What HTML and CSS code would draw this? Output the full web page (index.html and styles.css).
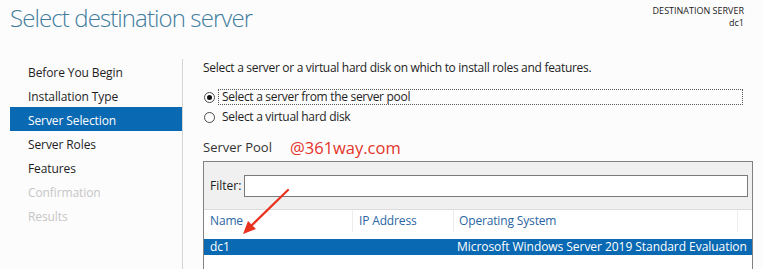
FILE: index.html
```html
<!DOCTYPE html>
<html>

<head>
  <meta charset="utf-8">
  <meta name="viewport" content="width=device-width, initial-scale=1">
  <title>Add Roles and Features Wizard</title>
  <link rel="stylesheet" href="styles.css">
</head>

<body>
	<div class="page">
		<div class="header">
			<h1>Select destination server</h1>
			<div class="dest">
				<div>DESTINATION SERVER</div>
				<div>dc1</div>
			</div>
		</div>

		<div class="main">
			<ul class="nav">
				<li>Before You Begin</li>
				<li>Installation Type</li>
				<li class="active">Server Selection</li>
				<li>Server Roles</li>
				<li>Features</li>
				<li class="off">Confirmation</li>
				<li class="off">Results</li>
			</ul>

			<div class="content">
				<p class="intro">Select a server or a virtual hard disk on which to install roles and features.</p>

				<div class="option">
					<span class="radio checked"></span>
					<span class="label focus">Select a server from the server pool</span>
				</div>
				<div class="option">
					<span class="radio"></span>
					<span class="label">Select a virtual hard disk</span>
				</div>

				<div class="pool-title">
					<span>Server Pool</span>
					<span class="mark">@361way.com</span>
				</div>

				<div class="pool">
					<div class="filter">
						<span>Filter:</span>
						<div class="input"></div>
					</div>
					<div class="cols">
						<div class="col c-name">Name</div>
						<div class="col c-ip">IP Address</div>
						<div class="col c-os">Operating System</div>
						<div class="col c-end"></div>
					</div>
					<div class="row selected">
						<div class="c-name">dc1</div>
						<div class="c-ip"></div>
						<div class="c-os">Microsoft Windows Server 2019 Standard Evaluation</div>
					</div>
				</div>
			</div>
		</div>

		<!-- red arrow drawn over the screenshot -->
		<svg class="arrow" width="60" height="60" viewBox="0 0 60 60">
			<line x1="48" y1="3" x2="10" y2="40" stroke="#e8331f" stroke-width="2.2" stroke-linecap="round"/>
			<polygon points="3,47 8,34 16,42" fill="#e8331f"/>
		</svg>
	</div>
</body>

</html>
```

FILE: styles.css
```css
body {
	margin: 0;
	background-color: #fcfcfc;
	font-family: "Open Sans", "Noto Sans", sans-serif;
	font-size: 12px;
	color: #1e1e1e;
}

.page {
	position: relative;
	width: 762px;
	height: 269px;
	overflow: hidden;
}

.header {
	display: flex;
	justify-content: space-between;
	height: 59px;
}

h1 {
	margin: 0;
	padding: 1px 0 0 10px;
	font-size: 24px;
	font-weight: 300;
	line-height: 34px;
	letter-spacing: -0.9px;
	color: #3f7c9e;
}

.dest {
	padding: 5px 18px 0 0;
	text-align: right;
	font-size: 9px;
	line-height: 12px;
	color: #222;
}

.main {
	display: flex;
}

.nav {
	list-style: none;
	margin: 0 0 0 10px;
	padding: 0;
	width: 172px;
	height: 210px;
	border-right: 1px solid #d4d4d4;
	letter-spacing: -0.1px;
}

.nav li {
	height: 24px;
	line-height: 27px;
	padding-left: 18px;
}

.nav li.active {
	background: #0a69b3;
	color: #fff;
}

.nav li.off {
	color: #c6c6c6;
}

.content {
	flex: 1;
	padding: 0 9px 0 20px;
}

.intro {
	margin: 0;
	line-height: 18px;
	letter-spacing: -0.3px;
}

.option {
	display: flex;
	align-items: center;
	height: 20px;
}

.option:first-of-type {
	margin-top: 10px;
}

.radio {
	width: 11px;
	height: 11px;
	border: 1px solid #4a4a4a;
	border-radius: 50%;
	margin-left: 1px;
	box-sizing: border-box;
	position: relative;
	background: #fff;
}

.radio.checked::after {
	content: "";
	position: absolute;
	left: 2px;
	top: 2px;
	width: 5px;
	height: 5px;
	border-radius: 50%;
	background: #111;
}

.label {
	margin-left: 3px;
	padding: 0 3px;
	line-height: 14px;
	letter-spacing: -0.3px;
	border: 1px dotted transparent;
}

.label.focus {
	flex: 1;
	margin-right: 10px;
	border-color: #555;
}

.pool-title {
	display: flex;
	align-items: center;
	height: 24px;
	margin-top: 8px;
	font-size: 13px;
	color: #333;
}

.mark {
	margin-left: 18px;
	font-size: 16.5px;
	color: #e3342a;
}

.pool {
	height: 120px;
	border: 1px solid #828282;
	border-bottom: 0;
	background: #fff;
	margin-top: 2px;
}

.filter {
	display: flex;
	align-items: center;
	height: 47px;
	padding: 0 4px 0 6px;
	background: #f0f0f0;
	border-bottom: 1px solid #dcdcdc;
}

.input {
	flex: 1;
	height: 20px;
	margin-left: 3px;
	background: #fff;
	border: 1px solid #7a7a7a;
}

.cols {
	display: flex;
	height: 22px;
	line-height: 22px;
	color: #2a66a3;
	letter-spacing: -0.15px;
}

.col {
	border-right: 1px solid #ededed;
}

.c-name {
	width: 142px;
	padding-left: 6px;
}

.c-ip {
	width: 94px;
	padding-left: 6px;
}

.c-os {
	width: 278px;
	padding-left: 5px;
}

.c-end {
	flex: 1;
	border-right: 0;
}

.row {
	display: flex;
	margin-top: 7px;
	height: 16px;
	line-height: 16px;
}

.row.selected {
	background: #0a69b3;
	color: #fff;
}

.row .c-os {
	white-space: nowrap;
	letter-spacing: -0.05px;
}

.arrow {
	position: absolute;
	left: 240px;
	top: 187px;
}
```
